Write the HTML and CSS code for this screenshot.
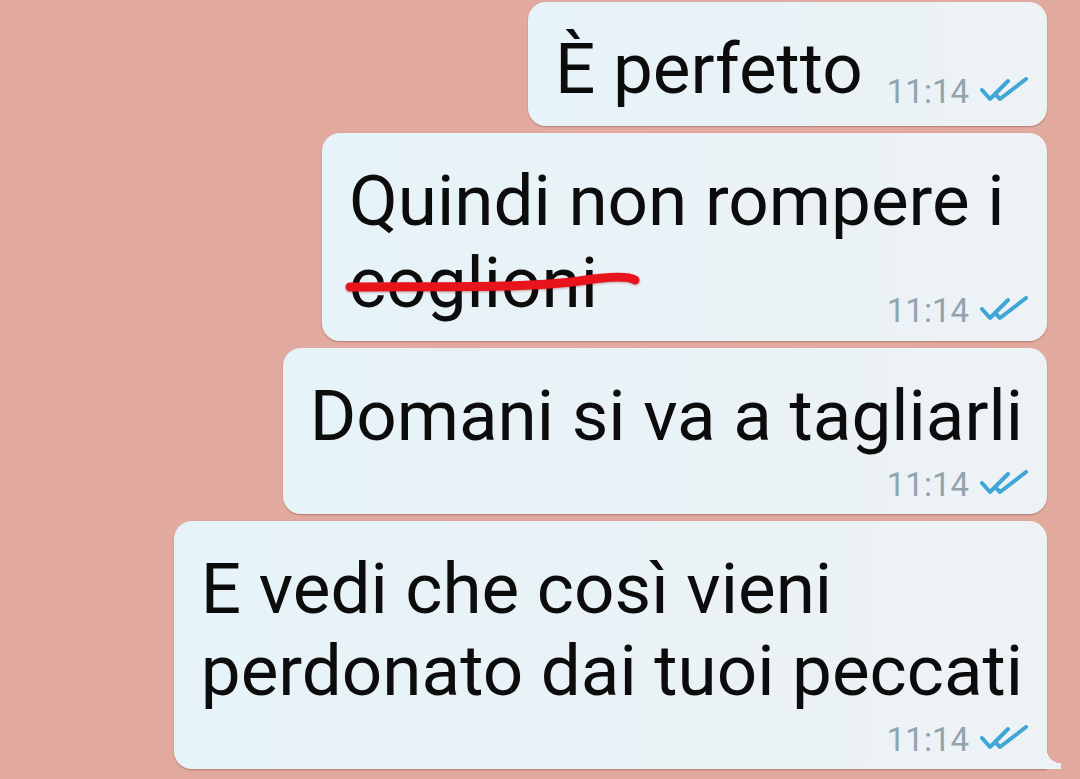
FILE: index.html
```html
<!DOCTYPE html>
<html lang="it">
<head>
    <meta charset="UTF-8">
    <meta name="viewport" content="width=device-width, initial-scale=1.0">
    <title>Chat</title>
    <link rel="stylesheet" href="styles.css">
</head>
<body>
    <div class="chat">
        <div class="bubble row">
            <p class="text">È perfetto</p>
            <div class="meta">
                <span class="time">11:14</span>
                <svg class="ticks" width="48" height="26" viewBox="0 0 48 26"><path d="M2 13 L10 22 L28 4 M16 18 L20 22 L46 2" /></svg>
            </div>
        </div>

        <div class="bubble overlap">
            <p class="text">Quindi non rompere i<br><span class="struck">coglioni<svg class="scribble" width="300" height="70" viewBox="0 0 300 70"><path d="M3 46 C 80 45 170 48 232 40 C 258 36 280 34 288 39" /></svg></span></p>
            <div class="meta">
                <span class="time">11:14</span>
                <svg class="ticks" width="48" height="26" viewBox="0 0 48 26"><path d="M2 13 L10 22 L28 4 M16 18 L20 22 L46 2" /></svg>
            </div>
        </div>

        <div class="bubble">
            <p class="text">Domani si va a tagliarli</p>
            <div class="meta">
                <span class="time">11:14</span>
                <svg class="ticks" width="48" height="26" viewBox="0 0 48 26"><path d="M2 13 L10 22 L28 4 M16 18 L20 22 L46 2" /></svg>
            </div>
        </div>

        <div class="bubble tail">
            <p class="text">E vedi che così vieni<br>perdonato dai tuoi peccati</p>
            <div class="meta">
                <span class="time">11:14</span>
                <svg class="ticks" width="48" height="26" viewBox="0 0 48 26"><path d="M2 13 L10 22 L28 4 M16 18 L20 22 L46 2" /></svg>
            </div>
        </div>
    </div>
</body>
</html>
```

FILE: styles.css
```css
body {
    margin: 0;
    background-color: #e2a99e;
    font-family: Roboto, "Noto Sans", Arial, sans-serif;
    height: 779px;
    overflow: hidden;
}
.chat {
    display: flex;
    flex-direction: column;
    align-items: flex-end;
    gap: 7px;
    padding: 2px 33px 0 0;
}
.bubble {
    position: relative;
    display: flex;
    flex-direction: column;
    padding: 27px 19px 11px 27px;
    border-radius: 18px;
    background: linear-gradient(to right, #e6f3f8, #edf2f5);
    box-shadow: 0 1px 1.5px rgba(90, 40, 30, 0.35);
}
.text {
    margin: 0;
    padding-right: 5px;
    white-space: nowrap;
    font-size: 71px;
    line-height: 82px;
    color: #0c0c0c;
}
.meta {
    display: flex;
    align-items: center;
    justify-content: flex-end;
    gap: 11px;
    margin-top: 10px;
    height: 36px;
}
.time {
    font-size: 33px;
    line-height: 36px;
    color: #91a4ad;
}
.ticks {
    margin-top: -4px;
}
.ticks path {
    fill: none;
    stroke: #3fa6d6;
    stroke-width: 4;
    stroke-linecap: round;
    stroke-linejoin: round;
}
.bubble.row {
    flex-direction: row;
    align-items: flex-end;
    padding-top: 26px;
    padding-bottom: 16px;
}
.bubble.row .text {
    padding-right: 0;
}
.bubble.row .meta {
    margin: 0 0 0 24px;
}
.bubble.overlap {
    min-width: 679px;
    padding-bottom: 12px;
}
.bubble.overlap .meta {
    margin-top: -31px;
}
.struck {
    position: relative;
}
.scribble {
    position: absolute;
    left: -2px;
    top: 0;
    overflow: visible;
}
.scribble path {
    fill: none;
    stroke: #e8141c;
    stroke-width: 9;
    stroke-linecap: round;
    filter: drop-shadow(0 1px 1px rgba(120, 0, 0, 0.35));
}
.bubble.tail {
    border-bottom-right-radius: 0;
}
.bubble.tail::after {
    content: "";
    position: absolute;
    right: -14px;
    bottom: 0;
    width: 14px;
    height: 20px;
    background: radial-gradient(circle at 100% 0, transparent 14px, #edf2f5 14.5px);
}
```
